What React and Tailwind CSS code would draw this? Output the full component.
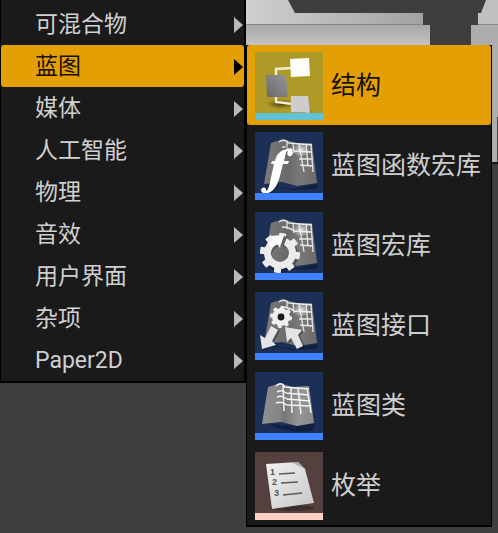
const CATEGORIES = [
  { label: '可混合物' },
  { label: '蓝图', active: true },
  { label: '媒体' },
  { label: '人工智能' },
  { label: '物理' },
  { label: '音效' },
  { label: '用户界面' },
  { label: '杂项' },
  { label: 'Paper2D' },
]

const ASSETS = [
  { label: '结构', Icon: StructIcon, tile: 'bg-[#b09a27]', bar: 'bg-[#5fc3d3]', active: true },
  { label: '蓝图函数宏库', Icon: FunctionIcon, tile: 'bg-[#1b2f57]', bar: 'bg-[#3f80ff]' },
  { label: '蓝图宏库', Icon: MacroIcon, tile: 'bg-[#1b2f57]', bar: 'bg-[#3f80ff]' },
  { label: '蓝图接口', Icon: InterfaceIcon, tile: 'bg-[#1b2f57]', bar: 'bg-[#3f80ff]' },
  { label: '蓝图类', Icon: ClassIcon, tile: 'bg-[#1b2f57]', bar: 'bg-[#3f80ff]' },
  { label: '枚举', Icon: EnumIcon, tile: 'bg-[#54413f]', bar: 'bg-[#ffcfc6]' },
]

// Teeth and body of a gear centred on cx, cy
function Gear({ cx, cy, r, body, hole, tooth, fill }) {
  return (
    <g transform={`translate(${cx} ${cy})`}>
      {[0, 45, 90, 135, 180, 225, 270, 315].map(a => (
        <rect key={a} x={-tooth / 2} y={-r} width={tooth} height={r - hole} rx="0.8" fill={fill} transform={`rotate(${a + 8})`} />
      ))}
      <circle r={(body + hole) / 2} fill="none" stroke={fill} strokeWidth={body - hole} />
    </g>
  )
}

function StructIcon() {
  return (
    <svg viewBox="0 0 68 61" className="block w-full">
      <defs>
        <linearGradient id="struct-dark" x1="0" y1="1" x2="1" y2="0">
          <stop offset="0" stopColor="#696869" />
          <stop offset="1" stopColor="#999799" />
        </linearGradient>
        <radialGradient id="struct-shadow">
          <stop offset="0" stopColor="#51470c" />
          <stop offset="1" stopColor="#51470c" stopOpacity="0" />
        </radialGradient>
      </defs>
      <ellipse cx="26" cy="52" rx="15" ry="5" fill="url(#struct-shadow)" />
      <ellipse cx="49" cy="60" rx="9" ry="3" fill="url(#struct-shadow)" />
      <path d="M21 24V17L37 16M21 44V50L38 52" fill="none" stroke="#f1eed6" strokeWidth="2.4" />
      <path d="M35 7 54 6 55 24 36 25Z" fill="#fdfdfc" />
      <path d="M11 23 31 23 33 45 12 45Z" fill="url(#struct-dark)" />
      <path d="M36 44 53 44 55 61 36 60Z" fill="#cecccd" />
    </svg>
  )
}

// Folded sheet that sits behind every blueprint glyph
function Sheet({ id }) {
  return (
    <>
      <defs>
        <linearGradient id={id} x1="0" y1="0" x2="1" y2="0">
          <stop offset="0" stopColor="#7b7b7b" />
          <stop offset="0.45" stopColor="#6a6a6a" />
          <stop offset="0.65" stopColor="#787878" />
          <stop offset="1" stopColor="#6c6c6c" />
        </linearGradient>
        <radialGradient id={`${id}-glow`}>
          <stop offset="0" stopColor="#fff" stopOpacity="0.8" />
          <stop offset="1" stopColor="#fff" stopOpacity="0" />
        </radialGradient>
      </defs>
      <path d="M9 52 38 57 62 52 64 54 60 57 36 58Z" fill="#0b1732" opacity="0.6" />
      <path d="M16 11 28 7 41 11 57 11 62 51 42 54 27 50 9 52Z" fill={`url(#${id})`} />
      <ellipse cx="46" cy="18" rx="8" ry="7" fill={`url(#${id}-glow)`} />
      <path
        d="M24 10Q29 6 34 11L57 13M27 15Q34 15 39 19L57 20M44 27 58 27M45 33 58 34M32 10 32 17M38 11 39 21M44 12 49 40M51 12 53 34M56 12 58 40"
        fill="none" stroke="#f4f4f4" strokeWidth="1.3" opacity="0.9" />
    </>
  )
}

function FunctionIcon() {
  return (
    <svg viewBox="0 0 68 61" className="block w-full">
      <Sheet id="sheet-function" />
      <path
        d="M33 17C28 16 25 24 24 29L19 49C18 56 15 61 9 60"
        fill="none" stroke="#0a1429" strokeWidth="6" opacity="0.3" transform="translate(2 0)" />
      <path
        d="M36 24C40 21 37 16 32 17C25 18 21 23 20 29H17L16 32H19L15 50C14 55 13 58 11 59C12 55 7 54 6 58C6 61 10 62 13 61C20 59 23 51 25 44L28 32H33L34 29H29L31 21C31 20 32 19 33 19C31 22 33 25 36 24Z"
        fill="#fff" />
    </svg>
  )
}

function MacroIcon() {
  return (
    <svg viewBox="0 0 68 61" className="block w-full">
      <Sheet id="sheet-macro" />
      <circle cx="26" cy="43" r="13" fill="none" stroke="#0a1429" strokeWidth="8" opacity="0.35" />
      <Gear cx={25} cy={41} r={20} body={16} hole={9} tooth={7} fill="#ececec" />
      {/* slit that opens the ring in front of the arrow head */}
      <path d="M29 24 25 35 29 33 32 25Z" fill="#5c5e62" />
      <path d="M15 24 28 23 25 36 22 32 16 35 13 31 18 27Z" fill="#fafafa" />
    </svg>
  )
}

function InterfaceIcon() {
  return (
    <svg viewBox="0 0 68 61" className="block w-full">
      <Sheet id="sheet-interface" />
      <Gear cx={26} cy={25} r={11} body={9} hole={3} tooth={4} fill="#eee" />
      <circle cx="26" cy="25" r="3.4" fill="#17191e" />
      <g fill="#0a1429" opacity="0.35" transform="translate(2 1)">
        <path d="M16 34 23 38 17 49 21 53 7 57 5 43 10 46Z" />
        <path d="M30 35 47 38 43 43 48 54 42 57 36 46 32 50Z" />
      </g>
      <path d="M16 34 23 38 17 49 21 53 7 57 5 43 10 46Z" fill="#e4e4e4" />
      <path d="M30 35 47 38 43 43 48 54 42 57 36 46 32 50Z" fill="#e4e4e4" />
    </svg>
  )
}

function ClassIcon() {
  return (
    <svg viewBox="0 0 68 61" className="block w-full">
      <defs>
        <linearGradient id="sheet-class" x1="0" y1="0" x2="1" y2="0">
          <stop offset="0" stopColor="#8f8f8f" />
          <stop offset="0.35" stopColor="#858585" />
          <stop offset="0.42" stopColor="#747474" />
          <stop offset="0.7" stopColor="#969696" />
          <stop offset="1" stopColor="#8a8a8a" />
        </linearGradient>
      </defs>
      <path d="M12 51 28 54 60 52 58 59 40 60 22 56Z" fill="#0b1732" opacity="0.6" />
      <path d="M13 15 26 11 37 15 54 14 59 51 42 54 26 50 7 52Z" fill="url(#sheet-class)" />
      <path
        d="M21 14Q26 9 30 15L54 17M22 20Q27 17 31 21L54 23M22 25Q27 23 32 27L55 29M21 31Q27 29 32 33L56 34M28 14 29 39M36 16 37 41M43 16 46 42M52 16 56 41"
        fill="none" stroke="#f4f4f4" strokeWidth="1.5" />
    </svg>
  )
}

function EnumIcon() {
  return (
    <svg viewBox="0 0 68 61" className="block w-full">
      <defs>
        <linearGradient id="enum-paper" x1="0" y1="0" x2="1" y2="1">
          <stop offset="0" stopColor="#f2f2f2" />
          <stop offset="1" stopColor="#c6c6c6" />
        </linearGradient>
      </defs>
      <ellipse cx="37" cy="56" rx="22" ry="3" fill="#2c2120" opacity="0.6" />
      <path d="M11 12 43 10 50 17 59 51 17 57Z" fill="url(#enum-paper)" />
      <path d="M36 10H43L50 17Z" fill="#aaa" />
      <path d="M24 22 40 21M26 31 43 30M28 43 47 41" fill="none" stroke="#5c5c5c" strokeWidth="1.3" />
      <g fill="#555" fontFamily="Liberation Sans, sans-serif" fontSize="9" fontWeight="bold">
        <text x="15" y="23">1</text>
        <text x="17" y="33">2</text>
        <text x="19" y="44">3</text>
      </g>
    </svg>
  )
}

// Pale geometry of the level viewport that shows above the submenu
function Viewport() {
  return (
    <svg viewBox="0 0 252 166" className="absolute top-0 left-[246px] w-[252px]" aria-hidden="true">
      <defs>
        <linearGradient id="wall" x1="0" y1="0" x2="1" y2="0">
          <stop offset="0" stopColor="#d0d0d0" />
          <stop offset="1" stopColor="#a2a2a2" />
        </linearGradient>
        <linearGradient id="ledge" x1="0" y1="0" x2="0" y2="1">
          <stop offset="0" stopColor="#a8a8a8" />
          <stop offset="1" stopColor="#c4c4c4" />
        </linearGradient>
      </defs>
      <path d="M0 0H42L49 13H177V25H0Z" fill="url(#wall)" />
      <path d="M0 25H184V46H0Z" fill="url(#ledge)" />
      <rect y="24" width="177" height="1" fill="#858585" />
      <path d="M240 0H252V25H232V13H235Z" fill="#c0c0c0" />
      <path d="M225 25H252V162H225Z" fill="#adadad" />
      <rect x="232" y="24" width="20" height="1" fill="#8a8a8a" />
      <rect x="251" y="117" width="1" height="45" fill="#4a4a4a" />
      <rect x="245" y="162" width="7" height="2" fill="#141414" />
    </svg>
  )
}

function Category({ label, active }) {
  return (
    <li>
      <button
        className={`flex w-full items-center justify-between rounded-[3px] pt-[5px] pr-px pb-[3px] pl-[34px] text-[23px] leading-[34px] ${
          active ? 'bg-[#e39f04] text-[#150f03]' : 'text-[#d0d0d0]'
        }`}>
        <span>{label}</span>
        <svg viewBox="0 0 9 16" className={`w-[9px] ${active ? 'text-black' : 'text-[#b9b9b9]'}`}>
          <path d="M0 0 9 8 0 16Z" fill="currentColor" />
        </svg>
      </button>
    </li>
  )
}

function Asset({ label, Icon, tile, bar, active }) {
  return (
    <li>
      <button
        className={`flex w-full items-center gap-2 rounded-[3px] pt-[7px] pb-[5px] pl-2 text-[25px] whitespace-nowrap ${
          active ? 'bg-[#e39f04] text-[#150f03]' : 'text-[#d0d0d0]'
        }`}>
        <span className={`w-[68px] shrink-0 ${tile}`}>
          <Icon />
          <span className={`block h-[7px] ${bar}`} />
        </span>
        <span>{label}</span>
      </button>
    </li>
  )
}

export default function App() {
  return (
    <div className="relative min-h-screen overflow-hidden bg-[#3e3e3e] font-['Roboto','Noto_Sans_CJK_SC',sans-serif]">
      <Viewport />
      <div className="relative grid grid-cols-2 items-start pr-[6px]">
        <ul className="border-r-2 border-b-2 border-l border-black bg-[#1a1a1a] pt-[3px]">
          {CATEGORIES.map(c => <Category key={c.label} {...c} />)}
        </ul>
        <ul className="mt-[45px] border-r border-b-2 border-l border-black bg-[#1a1a1a]">
          {ASSETS.map(a => <Asset key={a.label} {...a} />)}
        </ul>
      </div>
    </div>
  )
}
